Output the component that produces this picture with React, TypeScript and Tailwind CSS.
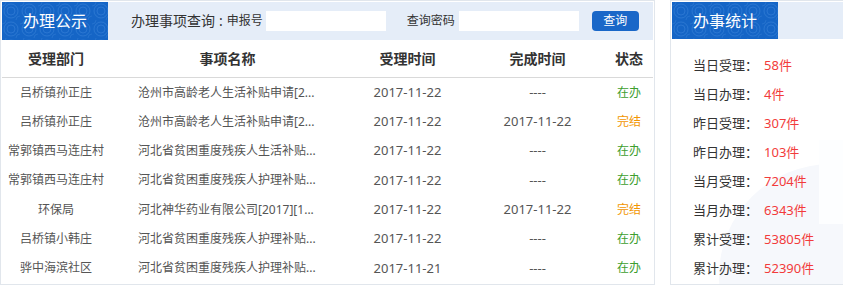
import React from "react";

const rows = [
  { dept: "吕桥镇孙正庄", name: "沧州市高龄老人生活补贴申请[2...", t1: "2017-11-22", t2: "----", st: "在办" },
  { dept: "吕桥镇孙正庄", name: "沧州市高龄老人生活补贴申请[2...", t1: "2017-11-22", t2: "2017-11-22", st: "完结" },
  { dept: "常郭镇西马连庄村", name: "河北省贫困重度残疾人生活补贴...", t1: "2017-11-22", t2: "----", st: "在办" },
  { dept: "常郭镇西马连庄村", name: "河北省贫困重度残疾人护理补贴...", t1: "2017-11-22", t2: "----", st: "在办" },
  { dept: "环保局", name: "河北神华药业有限公司[2017][1...", t1: "2017-11-22", t2: "2017-11-22", st: "完结" },
  { dept: "吕桥镇小韩庄", name: "河北省贫困重度残疾人护理补贴...", t1: "2017-11-22", t2: "----", st: "在办" },
  { dept: "骅中海滨社区", name: "河北省贫困重度残疾人护理补贴...", t1: "2017-11-21", t2: "----", st: "在办" },
];

const stats = [
  ["当日受理", "58件"],
  ["当日办理", "4件"],
  ["昨日受理", "307件"],
  ["昨日办理", "103件"],
  ["当月受理", "7204件"],
  ["当月办理", "6343件"],
  ["累计受理", "53805件"],
  ["累计办理", "52390件"],
];

function Swirl({ id }: { id: string }) {
  return (
    <svg className="absolute inset-0 w-full h-full" aria-hidden="true">
      <defs>
        <pattern id={id} width="18" height="18" patternUnits="userSpaceOnUse">
          <circle cx="9" cy="9" r="7" fill="none" stroke="#3a83d8" strokeWidth="1" opacity="0.55" />
          <circle cx="9" cy="9" r="4" fill="none" stroke="#3a83d8" strokeWidth="1" opacity="0.55" />
          <circle cx="0" cy="0" r="4" fill="none" stroke="#3a83d8" strokeWidth="1" opacity="0.4" />
          <circle cx="18" cy="18" r="4" fill="none" stroke="#3a83d8" strokeWidth="1" opacity="0.4" />
        </pattern>
      </defs>
      <rect width="100%" height="100%" fill={`url(#${id})`} />
    </svg>
  );
}

const font = "font-['Noto_Sans','Noto_Sans_CJK_SC',sans-serif]";

export default function App() {
  return (
    <div className={`w-[843px] h-[289px] bg-white overflow-hidden flex items-start gap-[15px] ${font}`}>
      {/* Left panel */}
      <div className="w-[655px] h-[285px] shrink-0 border border-[#e1e6ec] p-px flex flex-col">
        <div className="h-[38px] bg-[#e5edf8] flex items-center">
          <div className="relative w-[106px] h-full bg-[#1565c6] flex items-center justify-center overflow-hidden">
            <Swirl id="sw1" />
            <span className="relative text-white text-[16px] leading-none">办理公示</span>
          </div>
          <span className="ml-[23px] text-[14px] text-[#333] leading-none">办理事项查询</span>
          <span className="mx-[4px] text-[14px] text-[#333] leading-none">:</span>
          <span className="text-[12px] text-[#333] leading-none">申报号</span>
          <input className="ml-[3px] w-[120px] h-[20px] bg-white outline-none border-0" />
          <span className="ml-[21px] text-[12px] text-[#333] leading-none">查询密码</span>
          <input className="ml-[4px] w-[120px] h-[20px] bg-white outline-none border-0" />
          <button className="ml-[13px] w-[47px] h-[20px] rounded-[4px] bg-[#1967c8] text-white text-[12px] leading-none flex items-center justify-center">
            查询
          </button>
        </div>
        <div className="grid grid-cols-[108px_235px_125px_135px_1fr] h-[38px] border-b border-[#d9d9d9] items-center text-[14px] font-bold text-[#333]">
          <div className="text-center">受理部门</div>
          <div className="text-center">事项名称</div>
          <div className="text-center">受理时间</div>
          <div className="text-center">完成时间</div>
          <div className="text-center">状态</div>
        </div>
        <div className="flex flex-col">
          {rows.map((r, i) => (
            <div
              key={i}
              className="grid grid-cols-[108px_235px_125px_135px_1fr] h-[29.3px] items-center text-[12px] text-[#555]"
            >
              <div className="text-center whitespace-nowrap">{r.dept}</div>
              <div className="pl-[28px] whitespace-nowrap">{r.name}</div>
              <div className="text-center text-[13px]">{r.t1}</div>
              <div className="text-center text-[13px]">{r.t2}</div>
              <div className={`text-center ${r.st === "在办" ? "text-[#3d9e2e]" : "text-[#f29600]"}`}>{r.st}</div>
            </div>
          ))}
        </div>
      </div>

      {/* Right panel */}
      <div className="relative w-[180px] h-[285px] shrink-0 border border-[#e1e6ec] p-px flex flex-col overflow-hidden">
        <svg className="absolute left-0 top-0 w-[180px] h-[285px]" aria-hidden="true">
          <circle cx="160" cy="275" r="112" fill="#f6f8fc" />
          <rect x="148" y="139" width="40" height="84" fill="#fdfeff" />
        </svg>
        <div className="relative h-[38px] bg-[#e5edf8] flex items-center">
          <div className="relative w-[106px] h-full bg-[#1565c6] flex items-center justify-center overflow-hidden">
            <Swirl id="sw2" />
            <span className="relative text-white text-[16px] leading-none">办事统计</span>
          </div>
        </div>
        <div className="relative pt-[12px] pl-[21px] flex flex-col">
          {stats.map(([k, v]) => (
            <div key={k} className="h-[29px] flex items-center text-[13px] whitespace-nowrap">
              <span className="text-[#333]">{k}：</span>
              <span className="ml-[6px] text-[#f23b3b]">{v}</span>
            </div>
          ))}
        </div>
      </div>
    </div>
  );
}
